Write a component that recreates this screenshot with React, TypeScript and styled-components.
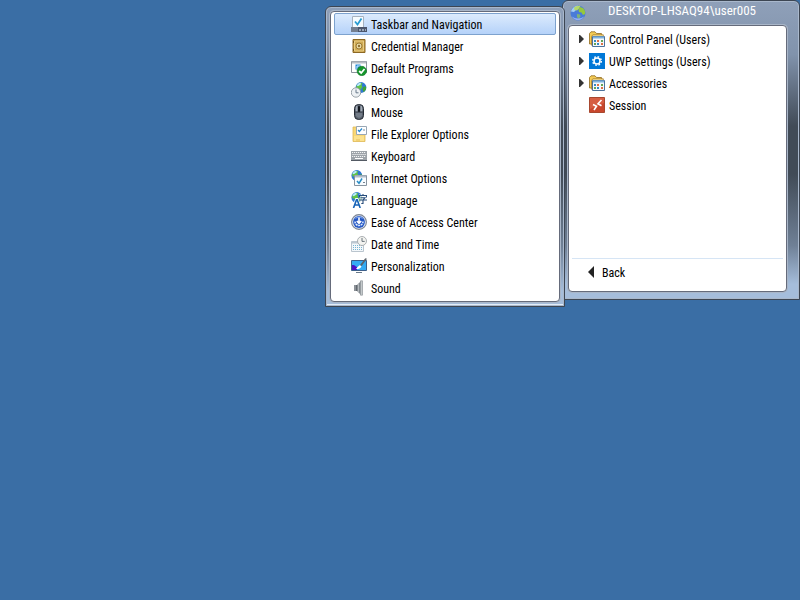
import React from "react";
import styled, { createGlobalStyle } from "styled-components";

const GlobalStyle = createGlobalStyle`
  *, *::before, *::after { box-sizing: border-box; }
  body {
    margin: 0;
    background: #3a6ea5;
    color: #000;
    font-family: "Roboto Condensed", Roboto, "Liberation Sans", Arial, sans-serif;
    font-size: 12px;
  }
`;

const Desktop = styled.main`
  min-height: 100vh;
  display: flex;
  justify-content: flex-end;
  align-items: flex-start;
`;

const Frame = styled.section`
  border: 1px solid #3d4653;
  border-radius: 6px 6px 0 0;
`;

const Flyout = styled(Frame)`
  position: relative;
  z-index: 1;
  width: 240px;
  margin-top: 6px;
  padding: 4px;
  box-shadow: inset 0 0 0 1px #a9b8cc, inset 0 -1px 0 1px #e4edf7;
  background: linear-gradient(#8fa0b9, #8193ac 10%, #414b57 40%, #414b57 56%, #6f8096 80%, #a5bddb 95%);
`;

const StartMenu = styled(Frame)`
  width: 238px;
  margin-left: -3px;
  padding: 0 12px 7px 5px;
  box-shadow: inset 0 0 0 1px #a9b8cc, inset 0 -1px 0 #fff;
  background: linear-gradient(#8fa0b9, #8193ac 18%, #414b57 42%, #414b57 58%, #6f8096 82%, #a5bddb 95%);
`;

const Pane = styled.div`
  background: #fff;
  border: 1px solid #656b7b;
  border-radius: 4px;
  box-shadow: 0 0 0 1px #a9b6c8;
`;

const FlyoutPane = styled(Pane)`
  padding: 1px 3px 2px 3px;
`;

const MenuPane = styled(Pane)`
  display: flex;
  flex-direction: column;
  min-height: 267px;
  padding: 2px 3px 3px;
`;

const Title = styled.header`
  display: flex;
  align-items: center;
  height: 24px;
  padding: 0 9px 0 2px;
  color: #fff;

  h1 {
    flex: 1;
    margin: 0;
    padding-bottom: 4px;
    font-size: 13px;
    font-weight: 400;
    line-height: 20px;
    text-align: center;
  }
`;

const List = styled.ul`
  margin: 0;
  padding: 0;
  list-style: none;
`;

const Item = styled.button<{ $active?: boolean; $inset: number }>`
  display: flex;
  align-items: center;
  gap: 4px;
  width: 100%;
  height: 22px;
  padding: 0 4px 0 ${(p) => p.$inset}px;
  border: 1px solid ${(p) => (p.$active ? "#7da2ce" : "transparent")};
  border-radius: 2px;
  background: ${(p) => (p.$active ? "linear-gradient(#dcebfd, #b5d2f9)" : "transparent")};
  color: inherit;
  font: inherit;
  line-height: 18px;
  text-align: left;
  white-space: nowrap;
`;

const Label = styled.span`
  padding-top: 2px;
`;

const Arrow = styled.svg`
  flex: none;
  width: 6px;
  height: 8px;
`;

const BackArrow = styled.svg`
  flex: none;
  width: 10px;
  height: 12px;
`;

const Glyph = styled.svg`
  flex: none;
  width: 16px;
  height: 16px;
`;

const Footer = styled.footer`
  margin-top: auto;
  padding: 2px 0 5px;
  border-top: 1px solid #d6e5f5;
`;

const Svg = ({ children }: { children: React.ReactNode }) => (
  <Glyph viewBox="0 0 16 16" aria-hidden="true">{children}</Glyph>
);

const Globe = () => (
  <>
    <circle cx="10" cy="5.5" r="5.4" fill="#2f78d4" />
    <path d="M5.5 3.5L8.5.7l3 .5-1 2 1 1.5-2 3-2-1-2-.5z" fill="#62c445" />
    <path d="M12 5l3-.8v3l-2.2 3-1.3-2.7z" fill="#3fa436" />
    <path d="M5.6 3.6Q7 1 9.5.6l.5 1.6-3 2z" fill="#b9eaff" />
  </>
);

const icons: Record<string, React.ReactNode> = {
  taskbar: (
    <Svg>
      <path d="M1.5 .5h11v11h-11z" fill="#f5fbff" stroke="#a7b2bf" />
      <path d="M4 5.5l2.5 3 4-6" fill="none" stroke="#279bd2" strokeWidth="1.8" />
      <path d="M0 11h16v5H0z" fill="#4c566c" />
      <path d="M0 11h7v5H0z" fill="#737e90" />
      <path d="M8 13h2v2H8zm3 0h2v2h-2zm3 0h1v2h-1z" fill="#98a6b8" />
    </Svg>
  ),
  credential: (
    <Svg>
      <path d="M2 1.5h12v13H2z" fill="#c49a42" stroke="#8c6824" />
      <path d="M3.5 3h9v10h-9z" fill="#d0ab55" stroke="#f0d894" strokeWidth=".8" />
      <circle cx="8" cy="8" r="3" fill="#eadba8" stroke="#9a7a34" />
      <circle cx="8" cy="8" r="1.2" fill="#8d6f30" />
      <path d="M2.5 3v2m0 6v2" stroke="#71531c" />
    </Svg>
  ),
  programs: (
    <Svg>
      <path d="M.5 1.5h15v11H.5z" fill="#fff" stroke="#8d949d" />
      <path d="M1 1.5h14v2H1z" fill="#b9bec5" />
      <path d="M4.5 4.5h5v5h-5z" fill="#2187d9" />
      <path d="M6 9V6h3" fill="none" stroke="#d7f0ff" />
      <circle cx="10.8" cy="11" r="4.7" fill="#15962c" stroke="#0c7422" strokeWidth=".6" />
      <path d="M8.2 11l2 2 3.3-4" fill="none" stroke="#fff" strokeWidth="1.8" />
    </Svg>
  ),
  region: (
    <Svg>
      <Globe />
      <circle cx="5" cy="10.5" r="4.7" fill="#edf1f4" stroke="#8e989f" strokeWidth=".9" />
      <path d="M5 7.5v3.3h2.5" fill="none" stroke="#68798a" />
    </Svg>
  ),
  mouse: (
    <Svg>
      <rect x="3.5" y=".5" width="9" height="15" rx="4" fill="#59616d" stroke="#252b35" />
      <path d="M4.7 4.5c0-2 .6-3 1.800-3v6H4.700zm6.600 0c0-2-.6-3-1.800-3v6h1.800z" fill="#a2abb7" />
      <path d="M4 8h8" stroke="#343a45" strokeWidth=".7" />
      <rect x="7" y="2" width="2" height="6" rx="1" fill="#11151c" />
      <path d="M5 9v2.500c1 3 5 3 6 0V9z" fill="#737c88" />
    </Svg>
  ),
  explorer: (
    <Svg>
      <path d="M2 1h4v3h8v11.500H2z" fill="#f8d775" stroke="#dfb956" strokeWidth=".8" />
      <path d="M5.500.5h10v8h-10z" fill="#fff" stroke="#99a7b5" />
      <path d="M7 4l1.400 1.500L11 2.500" fill="none" stroke="#2689cf" strokeWidth="1.2" />
      <path d="M12 4h2" stroke="#788a9b" />
      <path d="M3 10h10v5H3z" fill="#fce28f" />
      <path d="M5 14h4" stroke="#e7bf58" />
    </Svg>
  ),
  keyboard: (
    <Svg>
      <path d="M0 3h16v10H0z" fill="#9da3a9" />
      <path d="M1 4.500h14M1.500 6.500h14M1 8.500h14" stroke="#f4f5f6" strokeDasharray="1.2 .8" />
      <path d="M4 10.500h8" stroke="#fff" />
      <path d="M0 12.500h16" stroke="#535a63" />
    </Svg>
  ),
  internet: (
    <Svg>
      <g transform="translate(-4.2 0)"><Globe /></g>
      <path d="M3.500 5.500h12v10h-12z" fill="#f8fcff" stroke="#87939f" />
      <path d="M4 5.500h11v2H4z" fill="#b2bdc8" />
      <path d="M6 11l2 2.300L11 8.500" fill="none" stroke="#278bc4" strokeWidth="1.5" />
      <path d="M12 12.500h2" stroke="#758290" />
    </Svg>
  ),
  language: (
    <Svg>
      <g transform="translate(-4.2 0)"><Globe /></g>
      <path d="M2.500 16L5.500 7.500h.7L9.200 16M4 13h4" fill="none" stroke="#fff" strokeWidth="3" />
      <path d="M2.500 16L5.500 7.800h.7L9.200 16M4 13h4" fill="none" stroke="#1763b6" strokeWidth="1.6" />
      <path d="M8 2.500h8v9.500H9z" fill="#fff" opacity=".75" />
      <path d="M8.500 5.500v-2h7v2M12 2v1.500M9.500 5.700h4.500L12 8m-3.500 0H16M12 8v3.500h-1.700" fill="none" stroke="#284d7b" strokeWidth="1.1" />
    </Svg>
  ),
  access: (
    <Svg>
      <circle cx="8" cy="8" r="7.4" fill="#dce5f4" stroke="#7c8493" strokeWidth="1.1" />
      <circle cx="8" cy="8" r="5.9" fill="#2457c4" />
      <path d="M4 7.500a4 4 0 108 0" fill="none" stroke="#e2eeff" strokeWidth="1.5" strokeDasharray="2 .6" />
      <path d="M4.500 4.500a5 5 0 017 0" fill="none" stroke="#87aaf0" />
      <path d="M8 3.500V9M5.800 7L8 9.300 10.200 7" fill="none" stroke="#fff" strokeWidth="1.6" />
    </Svg>
  ),
  date: (
    <Svg>
      <path d="M.5 5.500h12v10H.5z" fill="#f4f8fb" stroke="#bac5ce" />
      <path d="M1 5h11v2.500H1z" fill="#bdc8d1" />
      <path d="M2 9.500h9M2 11.500h9M2 13.500h9" stroke="#79b6d3" strokeDasharray="1 1" />
      <circle cx="11" cy="5" r="4.5" fill="#f3f3f0" stroke="#a1a7aa" strokeWidth=".9" />
      <path d="M11 2v3.400h2.700" fill="none" stroke="#68747d" />
    </Svg>
  ),
  personal: (
    <Svg>
      <path d="M.5 2.500h15v10H.5z" fill="#35aaf3" stroke="#3d5f8a" />
      <path d="M1 7c3-.5 3 1 5 2v3H1z" fill="#4a10c6" />
      <path d="M5 11c1-1 2-3 4-4l1.500 1.500C9 11 7.500 11 5 11z" fill="#fff" />
      <path d="M9 7l5.300-6.800L16 .8 10.700 8z" fill="#5d646c" />
      <path d="M5 14.500h6" stroke="#687a8a" />
    </Svg>
  ),
  sound: (
    <Svg>
      <path d="M3 5h3v6H3z" fill="#626970" />
      <path d="M6 5l4-4v14l-4-4z" fill="#858c92" />
      <path d="M9.500.8h2v14.400h-2z" fill="#c5cacc" stroke="#8f959a" strokeWidth=".7" />
      <path d="M4 5v6M7.500 4v8" stroke="#b7bcc0" />
    </Svg>
  ),
  folder: (
    <Svg>
      <path d="M.5 13V2.500L2 .8h4l1.500 1.700h5V13z" fill="#f5cc55" stroke="#8f6a20" strokeWidth=".8" />
      <path d="M2.500 14.500v-9l1.300-1.700h10.500V6" fill="#ffe898" stroke="#a67a28" strokeWidth=".8" />
      <path d="M3.500 5.500h12v10h-12z" fill="#f6f8fb" stroke="#4c739c" />
      <path d="M4 5.500h11v2H4z" fill="#7fb2dd" />
      <path d="M5 9h2v2H5zm3 3h2v2H8z" fill="#3489c5" />
      <path d="M8 9h2v2H8zm4 3h2v2h-2z" fill="#dd7247" />
      <path d="M12 9h2v2h-2zM5 12h2v2H5z" fill="#65a557" />
    </Svg>
  ),
  settings: (
    <Svg>
      <path d="M0 0h16v16H0z" fill="#0078d7" />
      <circle cx="8" cy="8" r="4.3" fill="none" stroke="#fff" strokeWidth="1.4" strokeDasharray="1.69 1.69" />
      <circle cx="8" cy="8" r="3" fill="none" stroke="#fff" strokeWidth="1.5" />
    </Svg>
  ),
  session: (
    <Svg>
      <path d="M.5.5h15v15H.5z" fill="#c9472d" stroke="#a8482f" />
      <path d="M1 1h14v5L1 12z" fill="#d65e43" />
      <path d="M4 7.500l3.500 1.800L5 13M12.500 3L9 6.800l3.500 2" fill="none" stroke="#fff" strokeWidth="1.6" />
    </Svg>
  ),
  logo: (
    <Svg>
      <circle cx="8" cy="8" r="7.5" fill="#4a7bd8" />
      <path d="M1 6.500C2 3 5 .8 8 .6L7 4 4 7z" fill="#a5cdf2" />
      <path d="M4 2.500C6 1 9 .5 10.500 1L9 3.500 7 5.500 4.500 5z" fill="#b4d86a" />
      <path d="M10 2l3 1c2 2 2.500 4 2 6l-2 1-1.500-2.500L9 7 8.500 4.500z" fill="#96c83c" />
      <path d="M7 9l3 .5.5 2-2 2.500L7 12z" fill="#7fb27a" />
      <path d="M2 11.500c3 2.500 9 2.500 12 0-2.500 5-9.500 5-12 0z" fill="#93aef0" />
    </Svg>
  ),
};

const settingsItems = [
  ["taskbar", "Taskbar and Navigation"],
  ["credential", "Credential Manager"],
  ["programs", "Default Programs"],
  ["region", "Region"],
  ["mouse", "Mouse"],
  ["explorer", "File Explorer Options"],
  ["keyboard", "Keyboard"],
  ["internet", "Internet Options"],
  ["language", "Language"],
  ["access", "Ease of Access Center"],
  ["date", "Date and Time"],
  ["personal", "Personalization"],
  ["sound", "Sound"],
];

const menuItems = [
  { icon: "folder", label: "Control Panel (Users)", expandable: true },
  { icon: "settings", label: "UWP Settings (Users)", expandable: true },
  { icon: "folder", label: "Accessories", expandable: true },
  { icon: "session", label: "Session", expandable: false },
];

export default function App() {
  return (
    <>
      <GlobalStyle />
      <Desktop>
        <Flyout aria-label="Control Panel">
          <FlyoutPane>
            <List>
              {settingsItems.map(([icon, label], index) => (
                <li key={label}>
                  <Item $inset={16} $active={index === 0}>
                    {icons[icon]}
                    <Label>{label}</Label>
                  </Item>
                </li>
              ))}
            </List>
          </FlyoutPane>
        </Flyout>
        <StartMenu aria-label="Start menu">
          <Title>
            {icons.logo}
            <h1>DESKTOP-LHSAQ94\user005</h1>
          </Title>
          <MenuPane>
            <List>
              {menuItems.map((item) => (
                <li key={item.label}>
                  <Item $inset={6}>
                    <Arrow viewBox="0 0 6 8" aria-hidden="true">
                      {item.expandable && <path d="M0 0v8h1l4-4-4-4z" fill="#333" />}
                    </Arrow>
                    {icons[item.icon]}
                    <Label>{item.label}</Label>
                  </Item>
                </li>
              ))}
            </List>
            <Footer>
              <Item $inset={15}>
                <BackArrow viewBox="0 0 10 12" aria-hidden="true">
                  <path d="M6 0v12L0 6z" fill="#222" />
                </BackArrow>
                <Label>Back</Label>
              </Item>
            </Footer>
          </MenuPane>
        </StartMenu>
      </Desktop>
    </>
  );
}
